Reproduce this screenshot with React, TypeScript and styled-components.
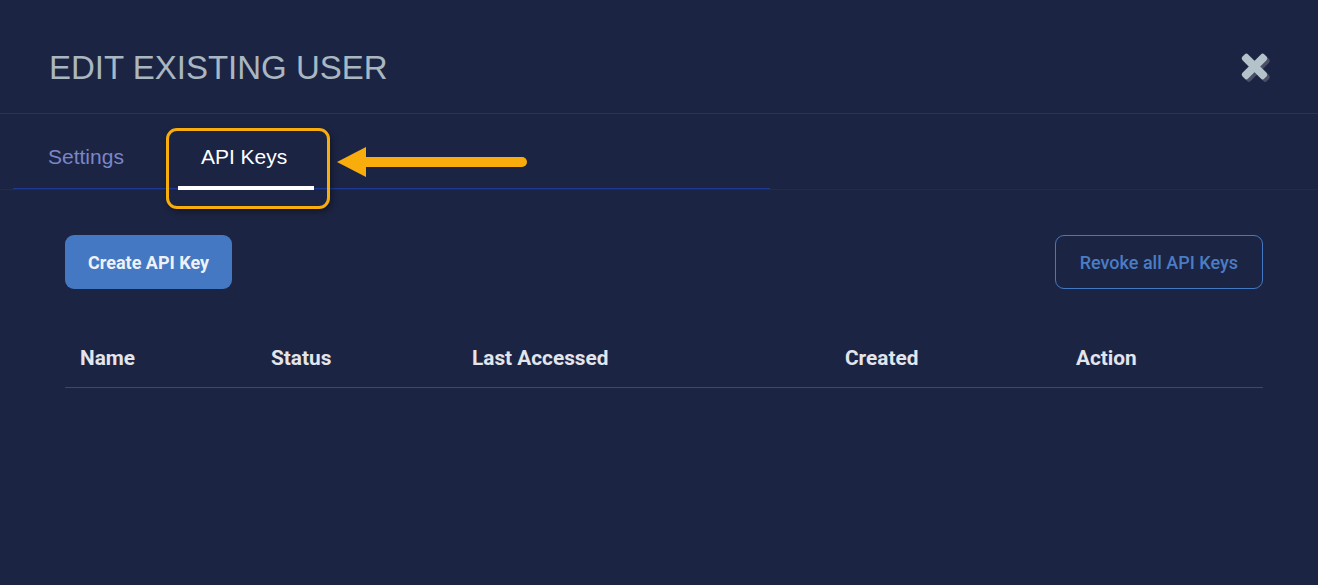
import styled, { createGlobalStyle } from "styled-components";

const GlobalStyle = createGlobalStyle`
  html, body {
    margin: 0;
    padding: 0;
    background: #1c2443;
  }
  * { box-sizing: border-box; }
`;

const Modal = styled.div`
  width: 1318px;
  height: 585px;
  background: #1c2443;
  font-family: "Liberation Sans", Arial, sans-serif;
  overflow: hidden;
`;

const Header = styled.div`
  height: 114px;
  display: flex;
  align-items: center;
  justify-content: space-between;
  padding: 22px 46px 0 49px;
  border-bottom: 1px solid #2c3452;
`;

const Title = styled.h1`
  margin: 0;
  font-size: 33px;
  font-weight: 400;
  color: #a9b7c0;
`;

const CloseButton = styled.button`
  border: 0;
  background: none;
  padding: 0;
  width: 32px;
  height: 32px;
  display: flex;
  cursor: pointer;
`;

const TabsBar = styled.div`
  height: 76px;
  border-bottom: 1px solid #232b49;
  position: relative;
`;

const TabList = styled.div`
  margin-left: 13px;
  width: 757px;
  height: 75px;
  display: flex;
  gap: 29px;
  padding-left: 10px;
  border-bottom: 1px solid #1d3a96;
`;

const Tab = styled.div<{ $active?: boolean }>`
  position: relative;
  height: 75px;
  padding: 10px ${(p) => (p.$active ? "27px 0 23px" : "25px 0")};
  display: flex;
  align-items: center;
  font-size: 21px;
  color: ${(p) => (p.$active ? "#ffffff" : "#7b86c9")};
  ${(p) =>
    p.$active &&
    `
    &::after {
      content: "";
      position: absolute;
      left: 0;
      right: 0;
      bottom: -1px;
      height: 4px;
      background: #ffffff;
    }
  `}
`;

const Highlight = styled.div`
  position: absolute;
  left: 166px;
  top: 14px;
  width: 164px;
  height: 81px;
  border: 3px solid #f8ad0d;
  border-radius: 11px;
  box-shadow: 2px 3px 6px rgba(0, 0, 0, 0.35);
  pointer-events: none;
`;

const Arrow = styled.svg`
  position: absolute;
  left: 335px;
  top: 31px;
`;

const Body = styled.div`
  padding: 45px 55px 0 65px;
  font-family: Roboto, "Liberation Sans", sans-serif;
`;

const Actions = styled.div`
  display: flex;
  justify-content: space-between;
  align-items: center;
`;

const Button = styled.button<{ $outline?: boolean }>`
  height: 54px;
  padding: 0 ${(p) => (p.$outline ? 24 : 23)}px;
  border-radius: 9px;
  font-family: Roboto, "Liberation Sans", sans-serif;
  font-size: 18px;
  font-weight: ${(p) => (p.$outline ? 500 : 700)};
  background: ${(p) => (p.$outline ? "transparent" : "#4578c2")};
  color: ${(p) => (p.$outline ? "#4a7dc6" : "#eef2f8")};
  border: ${(p) => (p.$outline ? "1.5px solid #4578c2" : "0")};
  cursor: pointer;
`;

const TableHead = styled.div`
  margin-top: 41px;
  height: 58px;
  display: grid;
  grid-template-columns: 191px 201px 373px 231px 1fr;
  align-items: center;
  border-bottom: 1px solid #4b4940;
`;

const HeadCell = styled.div`
  padding-left: 15px;
  padding-bottom: 2px;
  font-size: 20.8px;
  font-weight: 700;
  color: #e3e5ec;
`;

const columns = ["Name", "Status", "Last Accessed", "Created", "Action"];

export default function App() {
  return (
    <>
      <GlobalStyle />
      <Modal>
        <Header>
          <Title>EDIT EXISTING USER</Title>
          <CloseButton aria-label="Close">
            <svg width="32" height="32" viewBox="0 0 32 32">
              <g transform="translate(2.5 2.5)" fill="#4b4f66">
                <rect x="10.5" y="-1" width="8" height="31" rx="2.5" transform="rotate(45 14.5 14.5)" />
                <rect x="10.5" y="-1" width="8" height="31" rx="2.5" transform="rotate(-45 14.5 14.5)" />
              </g>
              <g fill="#b4c2c9">
                <rect x="10.5" y="-1" width="8" height="31" rx="2.5" transform="rotate(45 14.5 14.5)" />
                <rect x="10.5" y="-1" width="8" height="31" rx="2.5" transform="rotate(-45 14.5 14.5)" />
              </g>
            </svg>
          </CloseButton>
        </Header>

        <TabsBar>
          <TabList>
            <Tab>Settings</Tab>
            <Tab $active>API Keys</Tab>
          </TabList>
          <Highlight />
          <Arrow width="196" height="34" viewBox="0 0 196 34">
            <polygon points="2,17 31,2 31,32" fill="#f8ad0d" />
            <line x1="30" y1="17" x2="187" y2="17" stroke="#f8ad0d" strokeWidth="10" strokeLinecap="round" />
          </Arrow>
        </TabsBar>

        <Body>
          <Actions>
            <Button>Create API Key</Button>
            <Button $outline>Revoke all API Keys</Button>
          </Actions>
          <TableHead>
            {columns.map((c) => (
              <HeadCell key={c}>{c}</HeadCell>
            ))}
          </TableHead>
        </Body>
      </Modal>
    </>
  );
}
